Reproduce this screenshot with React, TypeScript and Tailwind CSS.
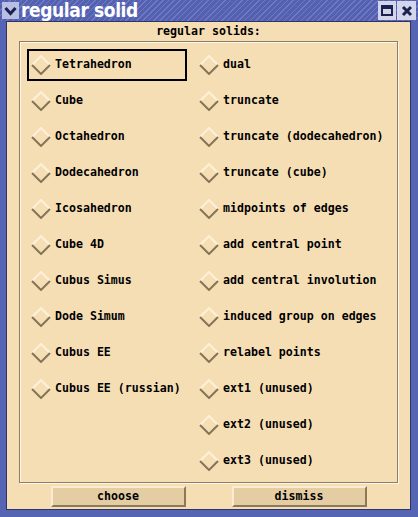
import React from 'react';

const leftItems = [
    'Tetrahedron',
    'Cube',
    'Octahedron',
    'Dodecahedron',
    'Icosahedron',
    'Cube 4D',
    'Cubus Simus',
    'Dode Simum',
    'Cubus EE',
    'Cubus EE (russian)',
];

const rightItems = [
    'dual',
    'truncate',
    'truncate (dodecahedron)',
    'truncate (cube)',
    'midpoints of edges',
    'add central point',
    'add central involution',
    'induced group on edges',
    'relabel points',
    'ext1 (unused)',
    'ext2 (unused)',
    'ext3 (unused)',
];

const Diamond: React.FC = () => (
    <svg width="20" height="20" viewBox="0 0 20 20" className="shrink-0">
        <polyline points="1,10 10,1 19,10" fill="none" stroke="#fdf0da" strokeWidth="2" />
        <polyline points="1,10 10,19 19,10" fill="none" stroke="#857459" strokeWidth="2" />
    </svg>
);

const RadioItem: React.FC<{ label: string; focused?: boolean; wide?: boolean }> = ({ label, focused, wide }) => (
    <div className="h-[36px] pt-[1px]">
        <div
            className={`h-[32px] flex items-center gap-[4px] pl-[2px] border-2 ${focused ? 'border-black' : 'border-transparent'} ${wide ? 'w-auto' : 'w-[160px]'}`}
        >
            <Diamond />
            <span className="whitespace-pre">{label}</span>
        </div>
    </div>
);

const TkButton: React.FC<{ label: string }> = ({ label }) => (
    <button className="w-[135px] h-[21px] bg-[#e4cda3] border-[2px] border-t-[#fbecd0] border-l-[#fbecd0] border-b-[#8b7a5a] border-r-[#8b7a5a] flex items-center justify-center">
        {label}
    </button>
);

const App: React.FC = () => {
    return (
        <div className="w-[418px] h-[517px] flex flex-col bg-[#5565b3] font-['DejaVu_Sans_Mono','Liberation_Mono',monospace] font-bold text-[11.6px] text-black">
            {/* title bar */}
            <div className="h-[21px] flex items-center bg-[repeating-linear-gradient(135deg,#5461b0_0px,#5461b0_3px,#7079c4_3px,#7079c4_4px)]">
                <div className="w-[17px] h-[17px] ml-[2px] bg-[#b9bfe3] flex items-center justify-center">
                    <svg width="13" height="10" viewBox="0 0 13 10">
                        <polyline points="1.5,2 6.5,7.5 11.5,2" fill="none" stroke="#1b2150" strokeWidth="3" />
                    </svg>
                </div>
                <span className="ml-[2px] text-white text-[19px] leading-none font-['DejaVu_Sans_Condensed','DejaVu_Sans',sans-serif] font-bold tracking-[-0.4px]">
                    regular solid
                </span>
                <div className="flex-1" />
                <div className="w-[18px] h-[19px] bg-[#d3d6ea] flex items-center justify-center">
                    <svg width="12" height="11" viewBox="0 0 12 11">
                        <rect x="1" y="1" width="10" height="9" fill="none" stroke="#1b2150" strokeWidth="2" />
                        <rect x="1" y="1" width="10" height="3" fill="#1b2150" />
                    </svg>
                </div>
                <div className="w-[19px] h-[19px] ml-[1px] mr-[2px] bg-[#d3d6ea] flex items-center justify-center">
                    <svg width="12" height="12" viewBox="0 0 12 12">
                        <path d="M2 2 L10 10 M10 2 L2 10" stroke="#1b2150" strokeWidth="3" />
                    </svg>
                </div>
            </div>

            {/* body */}
            <div className="flex-1 flex pl-[6px] pr-[7px] pb-[7px]">
                <div className="flex-1 flex flex-col bg-[#f6deb4] border border-[#2e3566]">
                    <div className="h-[19px] pt-[1px] flex items-center justify-center">regular solids:</div>
                    <div className="mx-[12px] h-[442px] border border-[#8b7e6a] shadow-[inset_1px_1px_0_#fff6e6,1px_1px_0_#fff6e6] pt-[6px] pl-[7px] grid grid-cols-[160px_auto] gap-x-[8px] content-start">
                        <div className="flex flex-col">
                            {leftItems.map((item, i) => (
                                <RadioItem key={item} label={item} focused={i === 0} />
                            ))}
                        </div>
                        <div className="flex flex-col">
                            {rightItems.map(item => (
                                <RadioItem key={item} label={item} wide />
                            ))}
                        </div>
                    </div>
                    <div className="flex justify-center gap-[46px] mt-[3px]">
                        <TkButton label="choose" />
                        <TkButton label="dismiss" />
                    </div>
                </div>
            </div>
        </div>
    );
};

export default App;
